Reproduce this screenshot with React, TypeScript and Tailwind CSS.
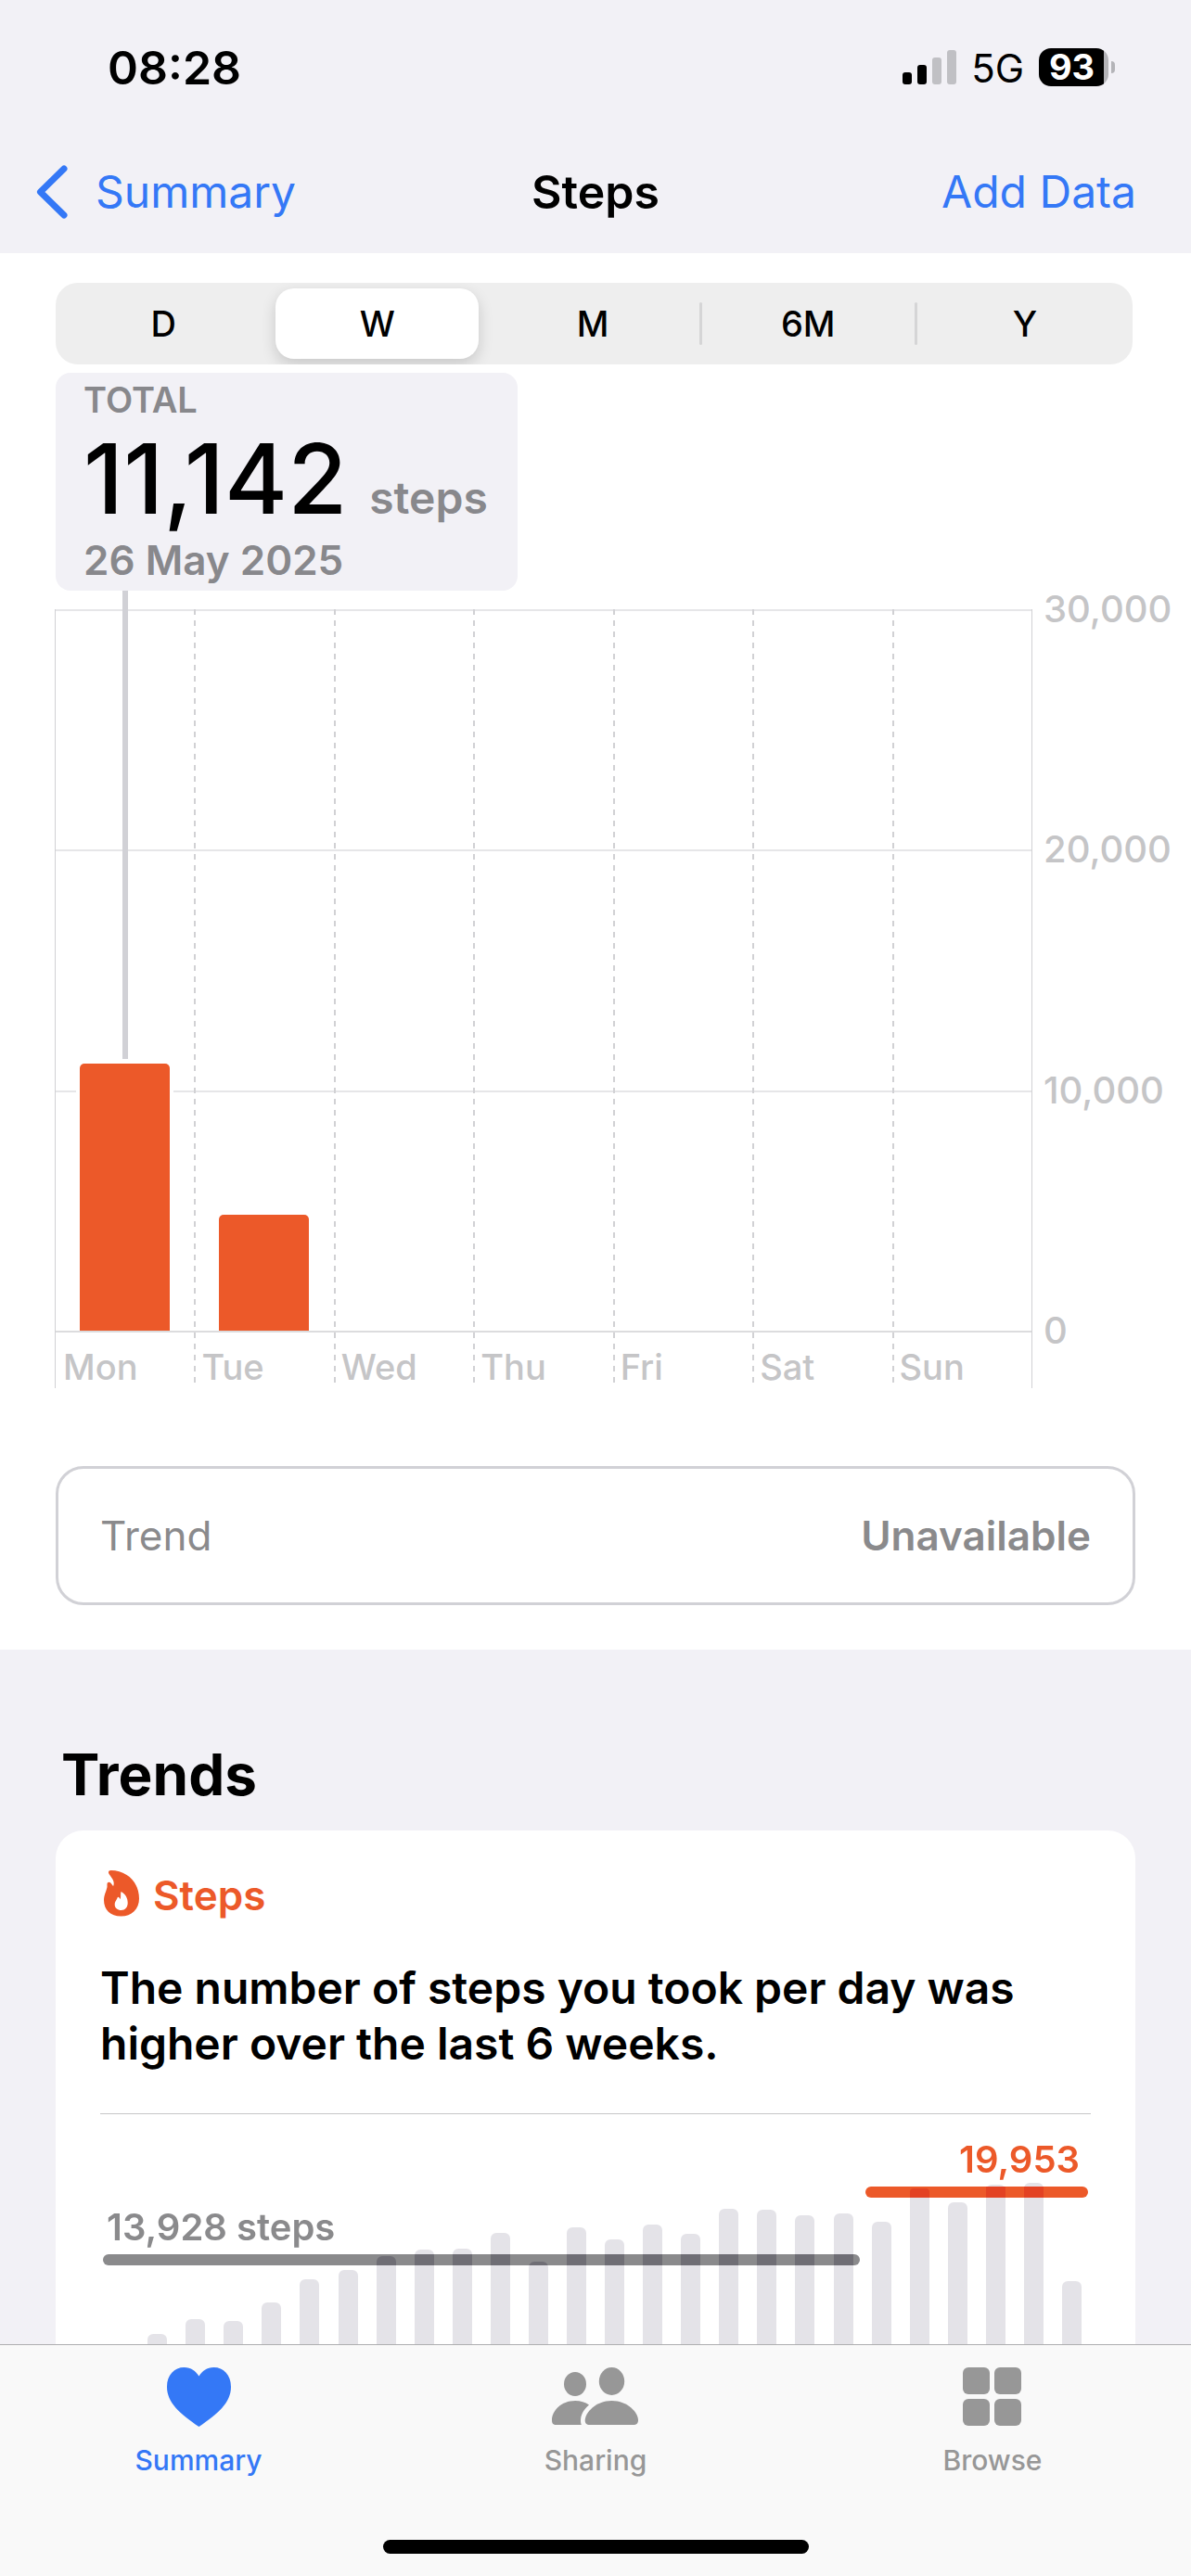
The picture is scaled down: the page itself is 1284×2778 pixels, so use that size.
import React from "react";

const week = [
  { day: "Mon", steps: 11142 },
  { day: "Tue", steps: 4860 },
  { day: "Wed", steps: 0 },
  { day: "Thu", steps: 0 },
  { day: "Fri", steps: 0 },
  { day: "Sat", steps: 0 },
  { day: "Sun", steps: 0 },
];
const AXIS_MAX = 30000;
const PLOT_HEIGHT = 778;
const ranges = ["D", "W", "M", "6M", "Y"];

// Weekly averages in the trend card, as bar heights in pixels
const trendBars = [
  145, 163, 179, 177, 197, 222, 232, 247, 254, 255, 272, 241, 278, 265, 281, 271, 298, 297, 291,
  293, 284, 320, 305, 324, 326, 220,
];
const RECENT_WEEKS = 6;
// Height of the lower edge of the recent-average line above the chart's base
const RECENT_LINE_BASE = 310;

function StatusBar() {
  return (
    <div className="flex h-[145px] items-center justify-between pl-[116px] pr-[82px]">
      <span className="text-[50px] leading-[60px] font-semibold">08:28</span>
      <div className="flex items-center">
        <svg className="h-[38px] w-[58px]" viewBox="0 0 58 38" aria-label="Signal">
          <rect x="0" y="24" width="10" height="13" rx="3" />
          <rect x="16" y="16" width="10" height="21" rx="3" />
          <rect x="32" y="8" width="10" height="29" rx="3" fill="#c0c0c4" />
          <rect x="48" y="0" width="10" height="37" rx="3" fill="#c0c0c4" />
        </svg>
        <span className="ml-[16px] pt-[2px] text-[42px] leading-[50px]">5G</span>
        <div className="ml-[16px] flex items-center">
          <div className="w-[75px] rounded-[13px] bg-[linear-gradient(to_right,#000_70px,#b4b4b8_70px)] pr-[4px] text-center text-[38px] leading-[41px] font-bold text-white">
            93
          </div>
          <div className="ml-[3px] h-[13px] w-[4px] rounded-r-full bg-[#b4b4b8]" />
        </div>
      </div>
    </div>
  );
}

function NavBar() {
  return (
    <nav className="grid h-[128px] grid-cols-[1fr_auto_1fr] items-center px-[39px] pb-1 text-[48px] leading-[60px]">
      <button className="flex items-center gap-[30px] text-[#3478f6]">
        <svg
          className="h-[58px] w-[34px]"
          viewBox="0 0 34 58"
          fill="none"
          stroke="currentColor"
          strokeWidth="7"
          strokeLinecap="round"
          strokeLinejoin="round"
        >
          <path d="M30 4 4.500 29 30 54" />
        </svg>
        Summary
      </button>
      <h1 className="text-[50px] font-semibold">Steps</h1>
      <button className="justify-self-end pr-[20px] text-[#3478f6]">Add Data</button>
    </nav>
  );
}

function RangePicker() {
  return (
    <div className="mr-[3px] grid h-[88px] grid-cols-5 overflow-hidden rounded-[24px] bg-[#eeeeee] text-[38px] leading-[46px] font-medium">
      {ranges.map((r) => (
        <div key={r} className="flex items-center">
          <button
            className={
              r === "W"
                ? "mr-[8px] ml-[5px] h-[76px] flex-1 rounded-[20px] bg-white shadow-[0_6px_16px_rgba(0,0,0,0.16)]"
                : "h-[76px] flex-1"
            }
          >
            {r}
          </button>
          {(r === "M" || r === "6M") && <div className="h-[46px] w-[3px] rounded-full bg-[#d5d5d6]" />}
        </div>
      ))}
    </div>
  );
}

function Callout() {
  return (
    <div className="mt-[9px] flex h-[235px] w-fit flex-col rounded-[16px] bg-[#f2f1f6] pt-[6px] pr-[32px] pl-[30px] font-semibold text-[#88888c]">
      <span className="text-[38px] leading-[46px]">TOTAL</span>
      <div className="flex h-[125px] items-baseline gap-[24px]">
        <span className="text-[104px] leading-[125px] font-medium text-black">11,142</span>
        <span className="text-[48px] leading-[50px]">steps</span>
      </div>
      <span className="text-[44px] leading-[50px]">26 May 2025</span>
    </div>
  );
}

function WeekChart() {
  return (
    <div className="mt-[20px] flex pl-[59px] text-[38px] leading-[46px] font-medium text-[#c5c5c7]">
      <div className="grid flex-1">
        <div className="grid h-[780px] grid-rows-3 border-b-2 border-[#dcdcde] [grid-area:1/1]">
          <div className="border-t-2 border-[#e6e6e8]" />
          <div className="border-t-2 border-[#e6e6e8]" />
          <div className="border-t-2 border-[#e6e6e8]" />
        </div>
        <div className="grid grid-cols-7 border-r border-[#d1d1d4] [grid-area:1/1]">
          {week.map((d, i) => (
            <div
              key={d.day}
              className={
                i === 0
                  ? "relative border-l border-[#d1d1d4]"
                  : "bg-[repeating-linear-gradient(to_bottom,#d1d1d4_0_6px,transparent_6px_12px)] bg-[length:2px_100%] bg-no-repeat"
              }
            >
              <div className="flex h-[778px] items-end justify-center">
                {d.steps > 0 && (
                  <div className="w-[105px] bg-white px-1 pt-1">
                    <div
                      className="rounded-t-[5px] bg-[#ec5929]"
                      style={{ height: Math.round((d.steps / AXIS_MAX) * PLOT_HEIGHT) - 1 }}
                    />
                  </div>
                )}
              </div>
              {i === 0 && (
                <div className="absolute -top-[20px] left-1/2 h-[505px] w-[6px] -translate-x-1/2 bg-[#d1d1d6]" />
              )}
              <div className="h-[62px] pt-[16px] pl-[8px]">{d.day}</div>
            </div>
          ))}
        </div>
      </div>
      <div className="-mt-[23px] flex h-[824px] w-[171px] flex-col justify-between pl-[12px] text-[40px]">
        <span>30,000</span>
        <span>20,000</span>
        <span>10,000</span>
        <span>0</span>
      </div>
    </div>
  );
}

function TrendCard() {
  return (
    <article className="rounded-[30px] bg-white px-[48px] pt-[40px]">
      <div className="flex items-center gap-[15px] text-[44px] leading-[60px] font-semibold text-[#ec5929]">
        <svg className="mb-[4px] ml-[4px] h-[50px] w-[38px]" viewBox="0 0 38 50" fill="currentColor">
          <path
            fillRule="evenodd"
            d="M7.500 0C25 0 38 13 38 30.500 38 42 30 49.500 18.500 49.500 7 49.500 0 42.500 0 32c0-5.500 2.500-9 3.500-14V15c0-2.500 2.500-3 4-1.300L10 17c.8-1 .9-3 .4-5C9.500 8 5.500 5 5 2.500 4.800 1 6 0 7.500 0ZM18.500 23c-.8 3 .1 5-.8 8.300-.4-1.300-1.500-2.300-2.900-2.800.1 2.500-3.100 4.500-3.100 8.500 0 3.500 3 6 7 6 4.200 0 7-3.200 7-8 0-5-2.400-9.500-7.200-12Z"
          />
        </svg>
        Steps
      </div>
      <p className="mt-[40px] text-[48px] leading-[60px] font-semibold">
        The number of steps you took per day was higher over the last 6 weeks.
      </p>
      <hr className="mt-[45px] border-t border-[#c6c6c8]" />
      <div className="isolate grid h-[400px] bg-white text-[40px] leading-[46px] font-semibold">
        <div className="grid grid-cols-[20fr_6fr] [grid-area:1/1]">
          <div className="px-[3px] pt-[99px] text-[#8a8a8c]">
            <div className="pl-[4px]">13,928 steps</div>
            <div className="mt-[6px] h-[12px] rounded-full bg-[#8a8a8c]" />
          </div>
        </div>
        <div className="flex items-end mix-blend-difference [grid-area:1/1]">
          {trendBars.map((h, i) => (
            <div key={i} className="flex flex-1 justify-center">
              <div className="w-[21px] rounded-t-[6px] bg-[#1b1c17]" style={{ height: h }} />
            </div>
          ))}
        </div>
        <div className="z-10 grid grid-cols-[20fr_6fr] [grid-area:1/1]">
          <div className="col-start-2 px-[3px] pt-[26px] text-right text-[#ec5929]">
            <div className="pr-[9px]">19,953</div>
            <div className="mt-[6px] h-[12px] overflow-hidden rounded-full bg-[#ec5929]">
              <div className="-mx-[3px] flex h-[12px] items-end">
                {trendBars.slice(-RECENT_WEEKS).map((h, i) => (
                  <div key={i} className="flex flex-1 justify-center">
                    <div
                      className="w-[21px] rounded-t-[4px] bg-[#e34223]"
                      style={{ height: Math.max(0, h - RECENT_LINE_BASE) }}
                    />
                  </div>
                ))}
              </div>
            </div>
          </div>
        </div>
      </div>
    </article>
  );
}

function TabBar() {
  return (
    <footer className="flex h-[250px] flex-none flex-col justify-between border-t border-[#aeaeb0] bg-[#f9f9f9] pb-[24px]">
      <div className="grid grid-cols-3 pt-[24px] text-[30px] leading-[40px] font-medium text-[#979797]">
        <button className="flex flex-col items-center gap-[16px] text-[#3478f6]">
          <svg className="h-[64px] w-[69px]" viewBox="0 0 69 64" fill="currentColor">
            <path d="M34.500 64C14 50 0 38 0 21 0 8 8 0 18.500 0 26 0 31 4 34.500 9.500 38 4 43 0 50.500 0 61 0 69 8 69 21c0 17-14 29-34.500 43Z" />
          </svg>
          Summary
        </button>
        <button className="flex flex-col items-center gap-[16px]">
          <svg className="h-[64px] w-[94px]" viewBox="0 0 94 64" fill="currentColor">
            <ellipse cx="25" cy="18" rx="12" ry="13" />
            <ellipse cx="64.500" cy="15" rx="13.700" ry="15" />
            <path d="M5 62c-4 0-5-2-5-5C0 47 10 36 25 36c6 0 11 1.500 15 4.500-6 5-9 11-9 16.500 0 2 .2 3.500.8 5Z" />
            <path d="M41 62c-4 0-5.300-2-5.300-5C36 49 47 36 64.500 36S93 49 93 57c0 3-1.500 5-5.500 5Z" />
          </svg>
          Sharing
        </button>
        <button className="flex flex-col items-center gap-[16px]">
          <svg className="h-[64px] w-[64px]" viewBox="0 0 64 64" fill="currentColor">
            <rect x="0" y="0" width="29" height="29" rx="6" />
            <rect x="34" y="0" width="29" height="29" rx="6" />
            <rect x="0" y="34" width="29" height="29" rx="6" />
            <rect x="34" y="34" width="29" height="29" rx="6" />
          </svg>
          Browse
        </button>
      </div>
      <div className="h-[15px] w-[459px] self-center rounded-full bg-black" />
    </footer>
  );
}

export default function App() {
  return (
    <div className="flex h-screen flex-col bg-[#f2f1f6] font-['Inter',sans-serif] text-black">
      <header>
        <StatusBar />
        <NavBar />
      </header>
      <main className="min-h-0 flex-1 overflow-y-auto [scrollbar-width:none]">
        <section className="bg-white pt-[32px] pb-[48px]">
          <div className="px-[60px]">
            <RangePicker />
            <Callout />
          </div>
          <WeekChart />
          <div className="mx-[60px] mt-[84px] flex h-[150px] items-center justify-between rounded-[30px] border-3 border-[#d1d1d6] px-[45px] text-[44px] leading-[60px] text-[#8a8a8c]">
            <span>Trend</span>
            <span className="font-semibold">Unavailable</span>
          </div>
        </section>
        <section className="px-[60px] pt-[95px]">
          <h2 className="mb-[20px] pl-[6px] text-[62px] leading-[80px] font-bold">Trends</h2>
          <TrendCard />
        </section>
      </main>
      <TabBar />
    </div>
  );
}
